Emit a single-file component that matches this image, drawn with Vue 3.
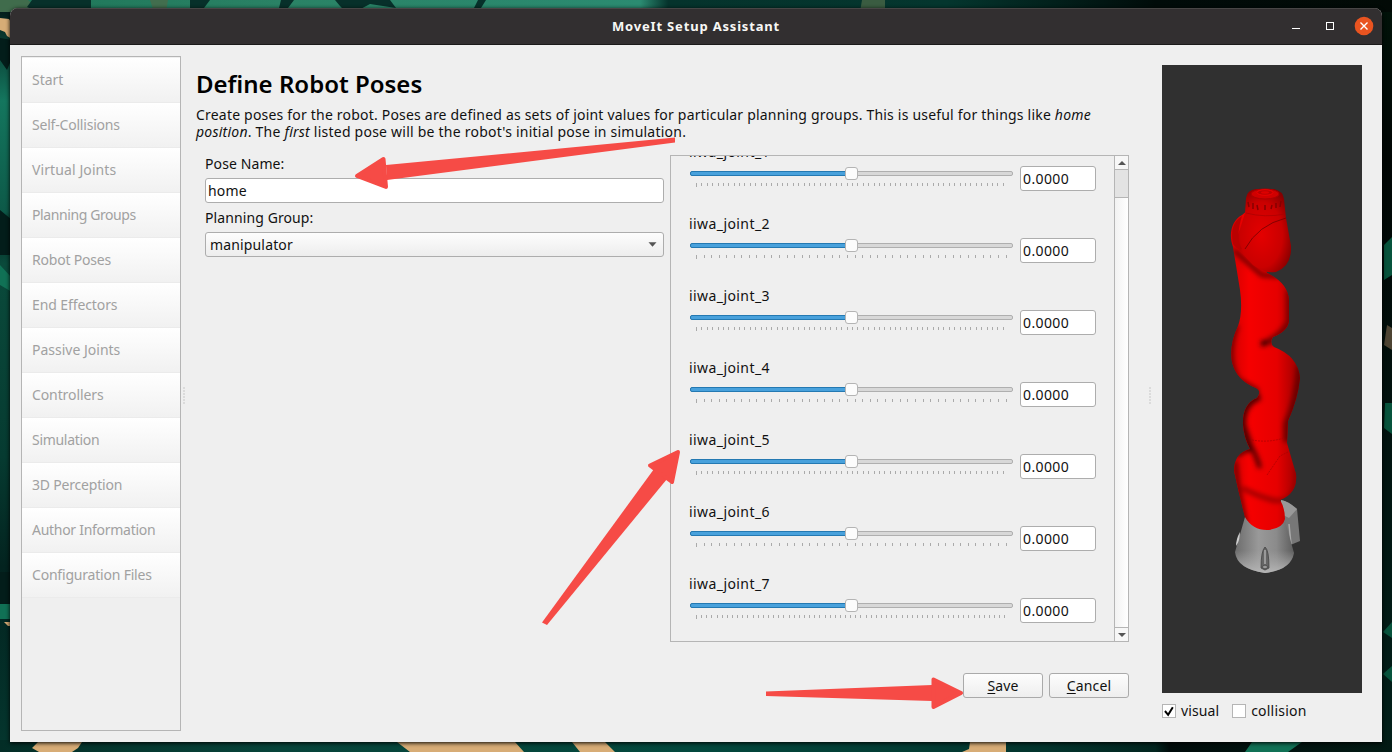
<script setup>
const steps = [
  ['Start', -0.05], ['Self-Collisions', -0.2], ['Virtual Joints', 0.1], ['Planning Groups', -0.4],
  ['Robot Poses', -0.2], ['End Effectors', -0.1], ['Passive Joints', 0], ['Controllers', -0.1],
  ['Simulation', -0.3], ['3D Perception', -0.2], ['Author Information', -0.28], ['Configuration Files', -0.2]
]
const wide = 5.38
const narrow = 7.55
const joints = [1, 2, 3, 4, 5, 6, 7].map((n) => {
  const gap = n === 7 ? 5.14 : n % 2 ? wide : narrow
  const ticks = []
  for (let x = 0; x <= 310.5; x += gap) ticks.push(Math.round(x) + 0.5)
  return { name: 'iiwa_joint_' + n, value: '0.0000', ticks }
})
</script>

<template>
  <div class="desktop">
    <svg class="wall" viewBox="0 0 1392 752">
      <defs>
        <linearGradient id="top"><stop offset="0" stop-color="#1d7558" /><stop offset=".2" stop-color="#2a8265" /><stop offset=".46" stop-color="#2b8b71" /><stop offset=".48" stop-color="#05332c" /><stop offset=".68" stop-color="#04362e" /><stop offset=".83" stop-color="#000b09" /><stop offset="1" stop-color="#020a06" /></linearGradient>
        <linearGradient id="bottom"><stop offset="0" stop-color="#032d26" /><stop offset=".2" stop-color="#07443a" /><stop offset=".5" stop-color="#03483d" /><stop offset=".75" stop-color="#03342d" /><stop offset=".83" stop-color="#02251f" /><stop offset=".84" stop-color="#000c0b" /><stop offset="1" stop-color="#031a14" /></linearGradient>
        <linearGradient id="left" x2="0" y2="1"><stop offset="0" stop-color="#041f1c" /><stop offset=".12" stop-color="#14765e" /><stop offset=".27" stop-color="#0d5948" /><stop offset=".29" stop-color="#042b25" /><stop offset=".34" stop-color="#0a4a3b" /><stop offset=".6" stop-color="#063b31" /><stop offset=".75" stop-color="#03231f" /><stop offset="1" stop-color="#04362e" /></linearGradient>
        <linearGradient id="right" x2="0" y2="1"><stop offset="0" stop-color="#011209" /><stop offset=".2" stop-color="#010604" /><stop offset=".55" stop-color="#02130f" /><stop offset="1" stop-color="#02201a" /></linearGradient>
      </defs>
      <rect width="1392" height="12" fill="url(#top)" />
      <rect y="12" width="12" height="740" fill="url(#left)" />
      <rect x="1380" y="12" width="12" height="740" fill="url(#right)" />
      <rect y="740" width="1392" height="12" fill="url(#bottom)" />
      <path fill="#4c6a48" d="M0 0H28L35 6L20 12H0ZM150 0H168L166 12H154ZM862 0H885V12H860Z" opacity=".75" />
      <path fill="#07302a" d="M32 0H91V12H38L27 7ZM190 0L210 0L204 8H190ZM281 0H294L285 12H278ZM335 0H390L396 8L370 4L355 12H346L340 6ZM478 0H486L481 8H474Z" />
      <path fill="#d7ac76" d="M0 18L9 19L12 24V39L7 36L5 32L0 30ZM32 748L38 742H82L78 748L72 752H39ZM397 742H515L524 752H410ZM572 742H605L615 752H580ZM970 742H1006V752H962L969 749ZM4 622H12V626H8Z" />
      <path fill="#031d1a" d="M0 38L12 40V58L7 70L0 60ZM0 210L12 220V255H0ZM0 572H12V604H0Z" />
      <path fill="#107155" d="M0 604H12V619H0ZM0 265L12 278V292L0 285ZM1252 742H1302L1288 752H1245Z" />
      <path fill="#07533c" d="M1383 632L1392 622V638ZM1383 674L1392 666V682ZM1384 245L1392 237V275L1384 280ZM1385 403H1392V434L1384 428Z" />
      <path fill="#4d4433" d="M1387 325L1392 328V350L1384 345Z" />
    </svg>
    <main class="window">
      <header class="titlebar">
        <span class="title">MoveIt Setup Assistant</span>
        <svg class="controls" width="100" height="36" viewBox="0 0 100 36">
          <path d="M10 19.5h8" stroke="#fff" fill="none" />
          <rect x="44.5" y="13.5" width="7" height="7" stroke="#fff" fill="none" />
          <circle cx="82" cy="17" r="9.3" fill="#e95420" />
          <path d="M78.5 13.5l7 7m0-7l-7 7" stroke="#fff" stroke-width="1.4" />
        </svg>
      </header>
      <div class="body">
        <nav class="nav">
          <div v-for="s in steps" :key="s[0]" class="step" :style="{ letterSpacing: s[1] + 'px' }">{{ s[0] }}</div>
        </nav>
        <div class="grip"></div>
        <section class="content">
          <h1>Define Robot Poses</h1>
          <p><span class="l1">Create poses for the robot. Poses are defined as sets of joint values for particular planning groups. This is useful for things like <i>home</i></span><br /><span class="l2"><i>position</i>. The <i>first</i> listed pose will be the robot's initial pose in simulation.</span></p>
          <div class="columns">
            <div class="form">
              <label>Pose Name:</label>
              <div class="field">home</div>
              <label class="second">Planning Group:</label>
              <div class="field combo">manipulator<svg width="9" height="5" viewBox="0 0 9 5"><path d="M.5 .3h8L4.5 4.7z" fill="#555" /></svg></div>
            </div>
            <div class="joints">
              <div class="list">
                <div v-for="j in joints" :key="j.name" class="joint">
                  <div class="jname">{{ j.name }}</div>
                  <div class="jrow">
                    <div class="slider">
                      <div class="track"><div class="done"></div><div class="knob"></div></div>
                      <svg class="ticks" width="324" height="5"><path v-for="(t, i) in j.ticks" :key="t" :d="'M' + (t + 6) + ' 0v' + (i ? 3 : 4)" stroke="#aaa" /></svg>
                    </div>
                    <div class="value">{{ j.value }}</div>
                  </div>
                </div>
              </div>
              <div class="scroll">
                <div class="arrow"><svg width="8" height="4"><path d="M0 4h8L4 0z" fill="#555" /></svg></div>
                <div class="thumb"></div>
                <div class="arrow down"><svg width="8" height="4"><path d="M0 0h8L4 4z" fill="#555" /></svg></div>
              </div>
            </div>
          </div>
          <div class="actions">
            <button><u>S</u>ave</button>
            <button><u>C</u>ancel</button>
          </div>
        </section>
        <div class="grip right"></div>
        <aside class="preview">
          <svg class="robot" width="200" height="628" viewBox="1162 65 200 628">
            <defs>
              <linearGradient id="side"><stop offset="0" stop-color="#c80000" /><stop offset=".3" stop-color="#f60000" /><stop offset=".65" stop-color="#e60000" /><stop offset="1" stop-color="#8a0000" /></linearGradient>
              <radialGradient id="head" cx=".45" cy=".55" r=".65"><stop offset="0" stop-color="#e40000" /><stop offset=".6" stop-color="#ca0000" /><stop offset="1" stop-color="#780000" /></radialGradient>
              <linearGradient id="metal"><stop offset="0" stop-color="#6c6c6c" /><stop offset=".4" stop-color="#999" /><stop offset=".7" stop-color="#8b8b8b" /><stop offset="1" stop-color="#5d5d5d" /></linearGradient>
              <linearGradient id="foot" x2="0" y2="1"><stop offset=".6" stop-color="#aaa" stop-opacity="0" /><stop offset="1" stop-color="#b5b5b5" /></linearGradient>
              <filter id="soft" filterUnits="userSpaceOnUse" x="1215" y="180" width="100" height="370"><feGaussianBlur stdDeviation="2.8" /></filter>
              <clipPath id="arm"><path d="M1242 215C1232 220 1228 234 1233 247L1240 290Q1243 312 1238 326Q1229 345 1232 362Q1236 380 1256 388Q1262 391 1257 398Q1242 404 1243 425Q1244 438 1250 449Q1234 453 1234 471Q1239 494 1245 517Q1253 531 1269 530Q1283 528 1285 519Q1285 508 1280 500Q1298 493 1296 474L1287 443L1288 421Q1298 399 1300 378Q1298 356 1274 347Q1269 343 1273 337Q1288 331 1289 321V300Q1288 283 1267 273L1248 210Z" /></clipPath>
            </defs>
            <path d="M1281 500Q1288 501 1297 509L1300 541L1288 546L1280 520Z" fill="#777" />
            <path d="M1281 500Q1288 501 1297 509L1289 518L1281 514Z" fill="#999" />
            <path d="M1289 524L1291 544" stroke="#aaa" stroke-width="1.5" />
            <path d="M1245 517L1235 552Q1237 569 1265 573Q1291 570 1294 553L1284 517Z" fill="url(#metal)" />
            <path d="M1245 517L1235 552Q1237 569 1265 573Q1291 570 1294 553L1284 517Z" fill="url(#foot)" />
            <path d="M1240 532Q1236 539 1236 546Q1240 541 1240 532" fill="#ccc" />
            <path d="M1265 547Q1261 551 1261 568L1265 570L1269 568Q1269 550 1265 547Z" fill="#656565" stroke="#444" stroke-width=".8" />
            <path d="M1265 550V564" stroke="#999" stroke-width="2" /><ellipse cx="1265" cy="567" rx="2.5" ry="1.8" fill="#999" stroke="#444" stroke-width=".7" />
            <g clip-path="url(#arm)">
              <rect x="1225" y="200" width="80" height="335" fill="url(#side)" />
              <g filter="url(#soft)" fill="none">
                <path d="M1234 250Q1250 265 1262 275L1280 276" stroke="#600000" stroke-width="4" />
                <path d="M1261 344Q1267 343 1276 337" stroke="#200000" stroke-width="5" />
                <path d="M1290 290V322Q1284 334 1269 342" stroke="#7c0000" stroke-width="8" />
                <path d="M1236 325Q1224 358 1237 380L1258 392" stroke="#7c0000" stroke-width="7" />
                <path d="M1301 365Q1299 400 1288 424V442" stroke="#6b0000" stroke-width="9" />
                <path d="M1260 396Q1241 403 1242 425L1250 449" stroke="#500000" stroke-width="8" />
                <path d="M1236 456Q1247 448 1253 450Q1257 458 1260 468" stroke="#400000" stroke-width="4" />
                <path d="M1235 461L1238 490L1245 523" stroke="#700000" stroke-width="5" />
                <path d="M1242 488Q1258 496 1269 499Q1280 503 1289 498Q1299 487 1296 468" stroke="#900000" stroke-width="4" />
              </g>
              <path d="M1252 440Q1268 443 1284 438M1267 475L1280 456L1288 452" fill="none" stroke="#a80000" stroke-width=".7" stroke-dasharray="2 1" />
            </g>
            <path d="M1246 198Q1247 190 1256 189H1274Q1283 191 1284 199L1286 218L1291 246Q1292 266 1276 272Q1265 274 1253 265L1239 250Q1235 239 1240 229L1245 213Z" fill="url(#head)" />
            <path d="M1242 216Q1229 224 1233 244Q1238 251 1242 249Q1235 238 1242 216" fill="#b90000" />
            <ellipse cx="1265" cy="194" rx="14" ry="5" fill="#d00000" stroke="#a00" />
            <ellipse cx="1265" cy="192.5" rx="8" ry="2.8" fill="#b00" stroke="#ec0000" /><ellipse cx="1265" cy="192.5" rx="4" ry="1.2" fill="#d00" />
            <path d="M1248 202l1 5m4-4v6m4-4 1 5m7-5v5m7-5-1 4m5-6v5m5-7-1 6" stroke="#850000" stroke-width="1.5" />
            <path d="M1246 213Q1265 218 1285 214" fill="none" stroke="#a80000" stroke-width=".7" />
            <path d="M1245 249Q1258 225 1286 218" fill="none" stroke="#700000" stroke-width=".8" />
          </svg>
          <div class="checks">
            <span class="box"><svg width="12" height="12" viewBox="0 0 11 11"><path d="M1.8 5.5L4.7 9L9 2" fill="none" stroke="#000" stroke-width="1.8" /></svg></span><span class="visual">visual</span>
            <span class="box second-box"></span><span class="collision">collision</span>
          </div>
        </aside>
      </div>
    </main>
    <svg class="arrows" viewBox="0 0 1392 752">
      <g fill="#f64b46" stroke="#f64b46" stroke-linejoin="round">
        <path stroke="none" d="M675 137.5V142.5L387 180L386 165Z" /><path stroke-width="4" d="M357 176L383.5 159L386 187Z" />
        <path stroke="none" d="M542 622.5L547 625L667 479L654 469Z" /><path stroke-width="4" d="M678 452L650 465.5L672 482Z" />
        <path stroke="none" d="M766 691.5V696L932 701V685Z" /><path stroke-width="4" d="M961 693L933.5 679.5V707Z" />
      </g>
    </svg>
  </div>
</template>

<style>
body { margin: 0; overflow: hidden; }
</style>
<style scoped>
* { box-sizing: border-box; }
.desktop { position: relative; width: 1392px; height: 752px; padding: 8px 10px 10px; overflow: hidden; font: 14px/17px "Noto Sans", sans-serif; color: #111; }
.wall, .arrows { position: absolute; inset: 0; width: 1392px; height: 752px; pointer-events: none; }
.window { position: relative; width: 1372px; height: 734px; background: #efefef; border-radius: 8px 8px 0 0; overflow: hidden; box-shadow: 0 1px 4px #000; }
.titlebar { height: 37px; background: #322f30; border-top: 1px solid #484646; border-bottom: 1px solid #1b1a1a; position: relative; display: flex; justify-content: center; align-items: center; color: #f8f8f5; font-weight: 700; font-size: 13px; }
.title { letter-spacing: .82px; }
.controls { position: absolute; right: 0; top: 0; }
.body { display: flex; height: 697px; padding: 11px 20px 11px 11px; }
.nav { flex: none; width: 160px; height: 675px; border: 1px solid #b5b5b5; padding-top: 1px; }
.step { height: 45px; padding: 13px 10px 0; background: linear-gradient(#fff, #f1f1f1); color: #a1a1a1; border-bottom: 1px solid #ebebeb; font-size: 14px; white-space: nowrap; }
.grip { flex: none; width: 2px; height: 17px; margin: 331px 6px 0 2px; background: radial-gradient(circle at 1px 1px, #c4c4c4 .6px, transparent .8px) 0 0 / 2px 3px; }
.content { flex: none; width: 955px; padding: 12px 0 0 5px; }
h1 { font-size: 24px; font-weight: 600; line-height: 32px; margin: 0 0 6px; color: #000; white-space: nowrap; }
p { margin: 0; white-space: nowrap; line-height: 17px; }
.l1 { letter-spacing: .2px; }
.l2 { letter-spacing: .23px; }
.columns { display: flex; justify-content: space-between; margin-top: 15px; padding-left: 9px; height: 487px; width: 933px; }
.form { width: 459px; }
.form label { display: block; height: 23px; line-height: 18px; letter-spacing: .1px; }
.form label.second { margin-top: 6px; height: 23px; }
.field { height: 25px; border: 1px solid #adadad; border-radius: 3px; padding: 3px 2px; background: #fff; letter-spacing: .15px; }
.combo { display: flex; justify-content: space-between; align-items: center; padding: 0 6px 0 4px; background: linear-gradient(#fdfdfd, #ededed); }
.joints { width: 459px; height: 487px; border: 1px solid #b5b5b5; display: flex; overflow: hidden; }
.list { width: 442px; height: 485px; overflow: hidden; padding-left: 18px; }
.joint { height: 72px; }
.joint:first-child { margin-top: -13px; }
.jname { height: 20px; line-height: 18px; letter-spacing: .42px; }
.jrow { display: flex; justify-content: space-between; width: 407px; }
.slider { width: 324px; padding: 8px 0 0 1px; }
.track { position: relative; width: 323px; height: 5px; border: 1px solid #afafaf; border-radius: 2px; background: #d8d8d8; }
.done { width: 157px; height: 5px; margin: -1px; background: #48a1dc; border: 1px solid #2479b2; border-radius: 2px; }
.knob { position: absolute; left: 154px; top: -5px; width: 13px; height: 13px; border: 1px solid #b4b4b4; border-radius: 3px; background: #fcfcfc; }
.ticks { display: block; margin: 7px 0 0 0; }
.value { width: 76px; height: 25px; margin-top: 3px; border: 1px solid #adadad; border-radius: 3px; background: #fff; padding: 3px 2px; letter-spacing: .38px; }
.scroll { flex: none; margin-left: auto; width: 14px; height: 485px; border-left: 1px solid #b5b5b5; background: linear-gradient(90deg, #f2f2f2, #fff); display: flex; flex-direction: column; }
.arrow { height: 13px; display: flex; justify-content: center; align-items: center; background: #f7f7f7; }
.thumb { height: 29px; border: solid #b5b5b5; border-width: 1px 0; background: #e3e3e3; }
.down { height: 14px; margin-top: auto; border-top: 1px solid #b5b5b5; }
.actions { display: flex; justify-content: flex-end; gap: 6px; width: 933px; margin-top: 31px; }
button { width: 80px; height: 25px; padding: 0 0 1px; font: inherit; color: #111; border: 1px solid #aaa; border-radius: 3px; background: linear-gradient(#fdfdfd, #eeeeee); letter-spacing: .15px; }
u { text-underline-offset: 2px; }
.right { margin: 331px 11px 0 3px; }
.preview { flex: none; padding-top: 9px; width: 200px; }
.robot { display: block; background: #303030; }
.checks { display: flex; align-items: center; height: 35px; }
.box { flex: none; width: 14px; height: 14px; background: #fff; border: 1px solid #b5b5b5; display: flex; margin-right: 5px; }
.second-box { margin-left: 13px; }
.visual { letter-spacing: .1px; }
.collision { letter-spacing: .22px; }
</style>
